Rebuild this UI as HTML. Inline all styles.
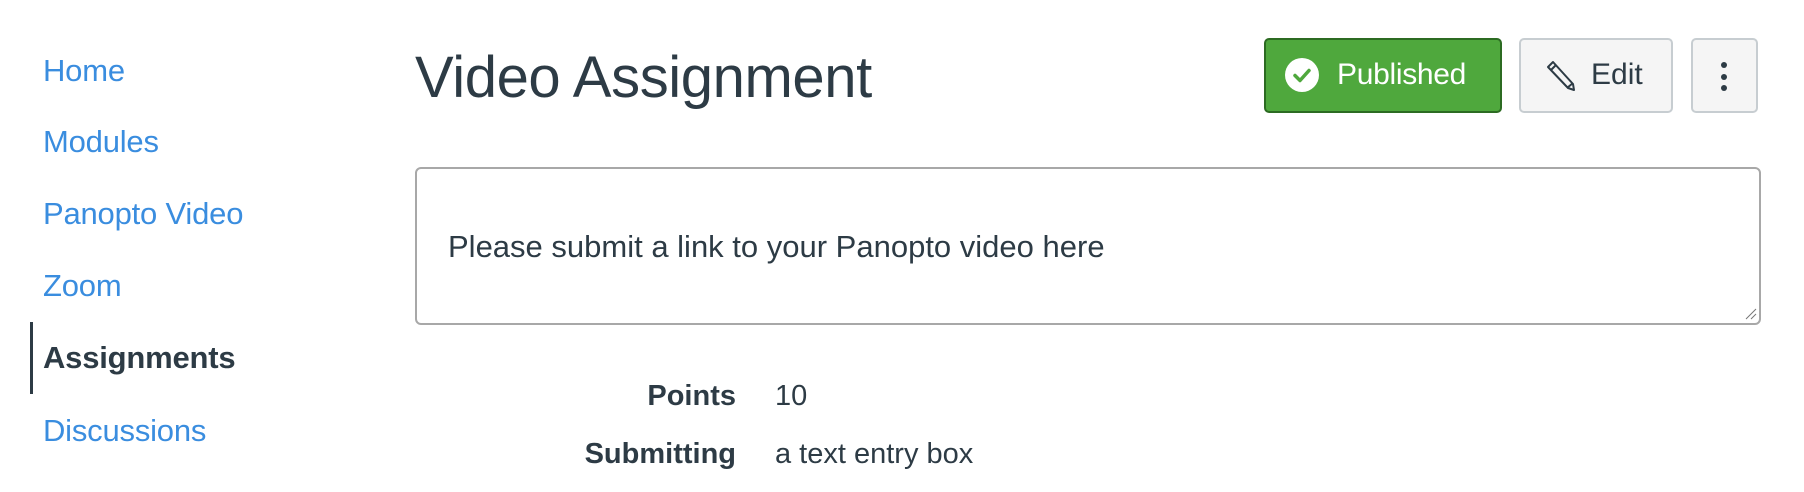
<!DOCTYPE html>
<html><head><meta charset="utf-8"><style>
body{margin:0;width:1804px;height:492px;background:#fff;position:relative;overflow:hidden;font-family:"Liberation Sans",sans-serif;color:#2d3b45}
.a{position:absolute;white-space:nowrap}
.nav{left:43px;font-size:31px;color:#3a8ddf;letter-spacing:-0.2px}
.btn{position:absolute;top:38px;height:75px;box-sizing:border-box;border-radius:5px}
</style></head><body>
<div class="a nav" style="top:53px">Home</div>
<div class="a nav" style="top:124px">Modules</div>
<div class="a nav" style="top:196px">Panopto Video</div>
<div class="a nav" style="top:268px">Zoom</div>
<div class="a nav" style="top:340px;color:#2d3b45;font-weight:bold">Assignments</div>
<div class="a" style="left:30px;top:322px;width:3px;height:72px;background:#2d3b45"></div>
<div class="a nav" style="top:413px">Discussions</div>
<div class="a" style="left:415px;top:44px;font-size:58px;letter-spacing:-0.4px">Video Assignment</div>

<div class="btn" style="left:1264px;width:238px;background:#4fa83d;border:2px solid #2c6b22"></div>
<svg class="a" style="left:1284px;top:57px" width="36" height="36" viewBox="0 0 36 36"><circle cx="18" cy="18" r="17" fill="#fff"/><path d="M11 18.5l5 5 9-10" stroke="#4fa83d" stroke-width="3.5" fill="none" stroke-linecap="round" stroke-linejoin="round"/></svg>
<div class="a" style="left:1337px;top:58px;font-size:30px;color:#fff;letter-spacing:-0.3px">Published</div>

<div class="btn" style="left:1519px;width:154px;background:#f5f5f5;border:2px solid #c7cdd1"></div>
<svg class="a" style="left:1546px;top:58px" width="30" height="34" viewBox="0 0 30 34"><path d="M2 9l5-5 20 22 1 6-6-2z M5 12l5-5 M21 30l6-5" stroke="#2d3b45" stroke-width="2" fill="none" stroke-linejoin="round"/></svg>
<div class="a" style="left:1591px;top:58px;font-size:30px">Edit</div>

<div class="btn" style="left:1691px;width:67px;background:#f5f5f5;border:2px solid #c7cdd1"></div>
<div class="a" style="left:1721px;top:62px;width:6px;height:6px;border-radius:3px;background:#2d3b45"></div>
<div class="a" style="left:1721px;top:74px;width:6px;height:6px;border-radius:3px;background:#2d3b45"></div>
<div class="a" style="left:1721px;top:85px;width:6px;height:6px;border-radius:3px;background:#2d3b45"></div>

<div class="a" style="left:415px;top:167px;width:1346px;height:158px;box-sizing:border-box;border:2px solid #a8a8a8;border-radius:6px"></div>
<svg class="a" style="left:1745px;top:308px" width="12" height="12"><path d="M1 11L11 1M6 11L11 6" stroke="#777" stroke-width="1"/></svg>
<div class="a" style="left:448px;top:229px;font-size:31px">Please submit a link to your Panopto video here</div>

<div class="a" style="right:1068px;top:380px;font-size:29px;font-weight:bold">Points</div>
<div class="a" style="left:775px;top:380px;font-size:29px">10</div>
<div class="a" style="right:1068px;top:438px;font-size:29px;font-weight:bold">Submitting</div>
<div class="a" style="left:775px;top:438px;font-size:29px">a text entry box</div>
</body></html>
